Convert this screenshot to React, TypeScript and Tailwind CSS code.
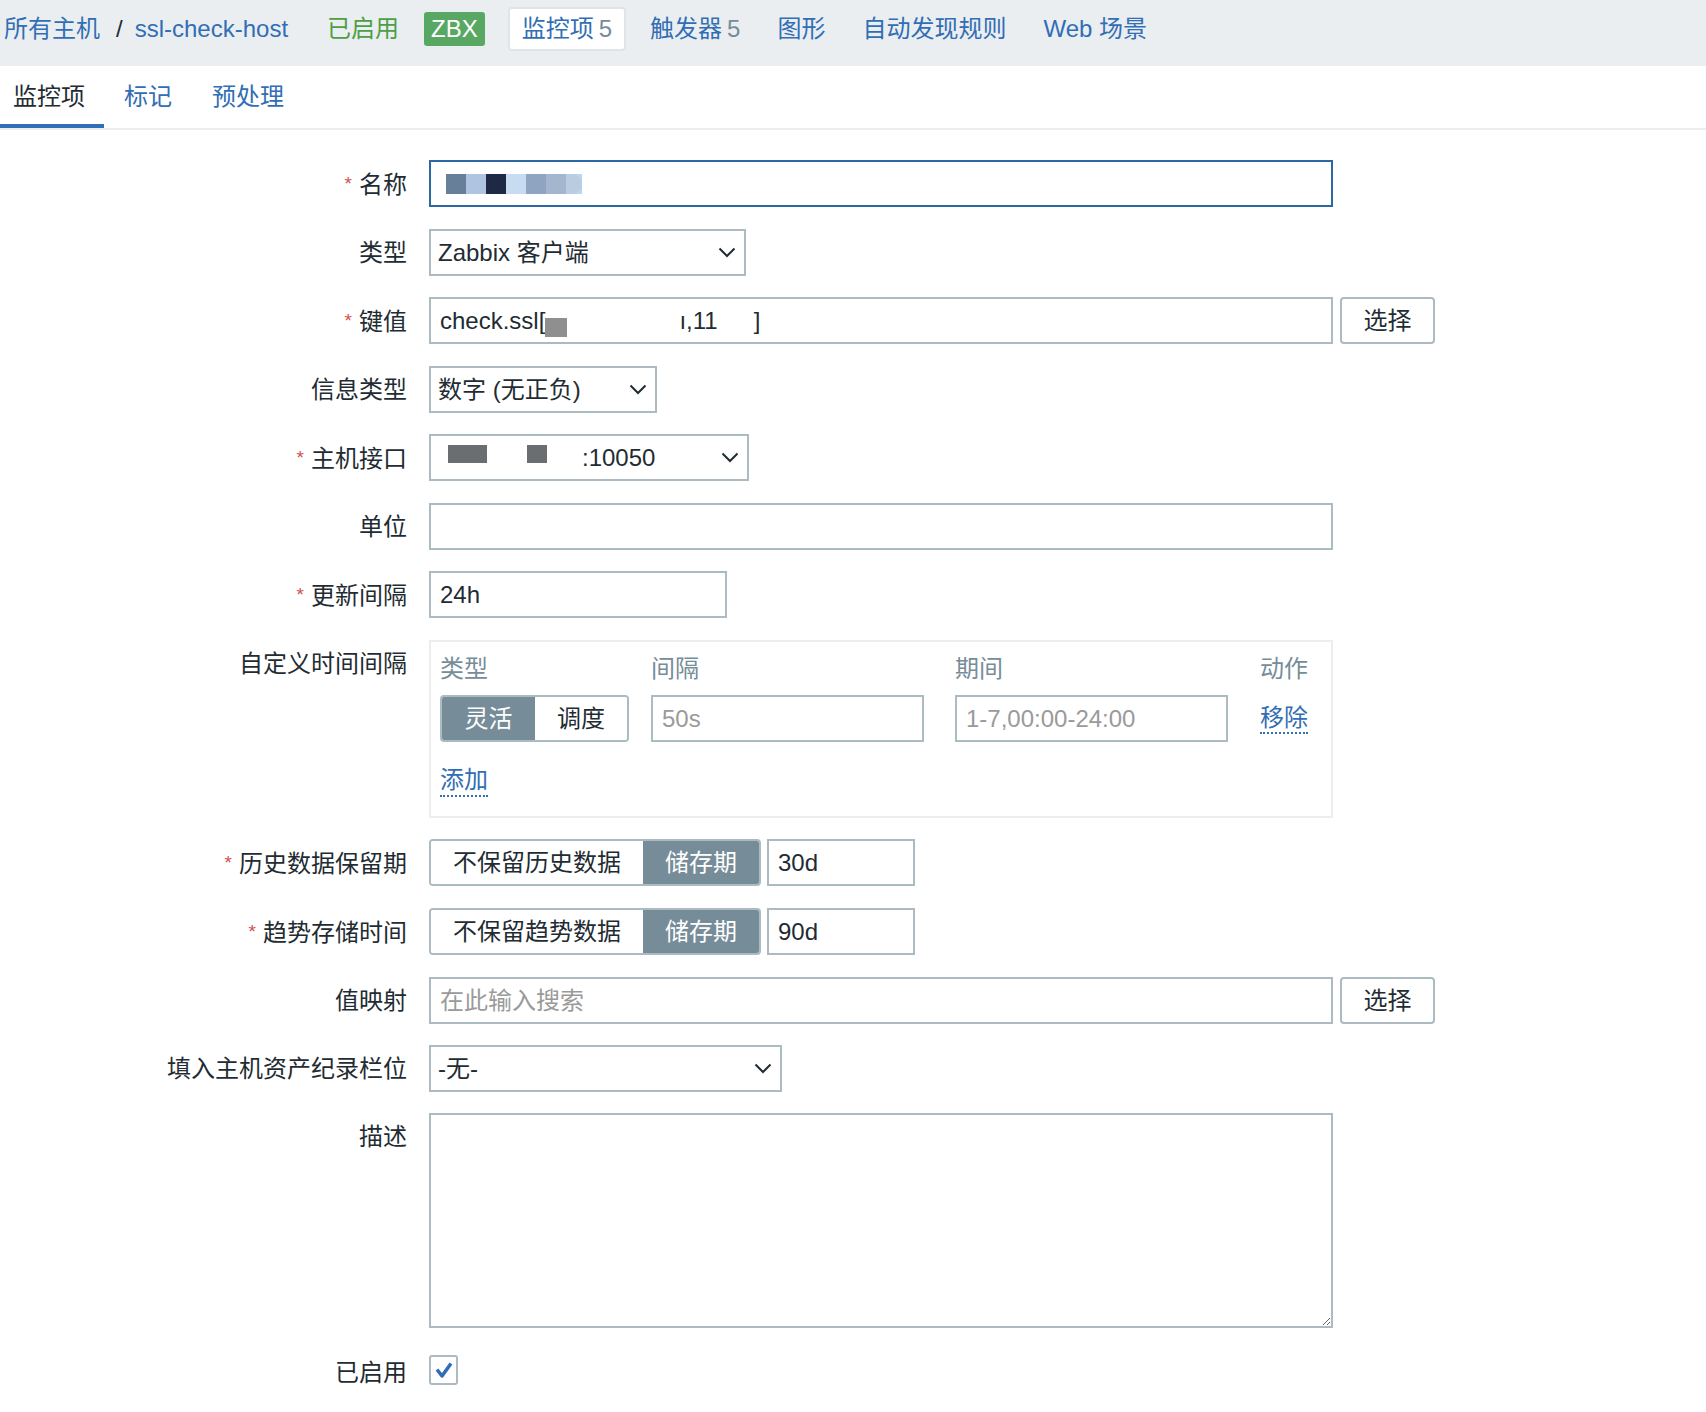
import React from 'react';

const link = 'text-[#316eb5]';

type RowProps = {
  label: string;
  required?: boolean;
  children: React.ReactNode;
};

function Row({ label, required, children }: RowProps) {
  return (
    <div className="flex">
      <div className="w-[407px] shrink-0 text-right leading-[47px] whitespace-nowrap">
        {required && <span className="mr-[7px] align-[3px] text-[19px] text-[#d64e4e]">*</span>}
        {label}
      </div>
      <div className="ml-[22px] flex items-start">{children}</div>
    </div>
  );
}

function Chevron() {
  return (
    <svg width="18" height="11" viewBox="0 0 18 11" fill="none">
      <polyline points="1.5,1.5 9,9 16.5,1.5" stroke="#1f2c33" strokeWidth="2" />
    </svg>
  );
}

function Select({ width, children }: { width: string; children: React.ReactNode }) {
  return (
    <div className={`${width} flex h-[47px] items-center justify-between border-2 border-[#acbbc2] bg-white pl-[7px] pr-[8px]`}>
      <div className="flex items-center whitespace-nowrap">{children}</div>
      <Chevron />
    </div>
  );
}

function SelectButton() {
  return (
    <div className="ml-[7px] flex h-[47px] w-[95px] items-center justify-center rounded-[4px] border-2 border-[#acbbc2] bg-white">
      选择
    </div>
  );
}

function Segmented({ left, right, leftW, rightW, active }: { left: string; right: string; leftW: string; rightW: string; active: 'left' | 'right' }) {
  return (
    <div className="flex h-[47px] w-fit overflow-hidden rounded-[4px] border-2 border-[#acbbc2]">
      <div
        className={`${leftW} flex items-center justify-center ${active === 'left' ? 'bg-[#768d99] text-white' : 'bg-white'}`}
      >
        {left}
      </div>
      <div
        className={`${rightW} flex items-center justify-center ${active === 'right' ? 'bg-[#768d99] text-white' : 'bg-white'}`}
      >
        {right}
      </div>
    </div>
  );
}

const navItems = [
  { label: '监控项', count: '5', active: true },
  { label: '触发器', count: '5' },
  { label: '图形' },
  { label: '自动发现规则' },
  { label: 'Web 场景' },
];

const nameBlocks = ['#687f99', '#aec4e0', '#1e2946', '#c7dcf0', '#8ea4c1', '#a3b6cd'];

export default function App() {
  return (
    <div className="min-h-[1412px] w-[1706px] bg-white font-['Liberation_Sans','Noto_Sans_CJK_SC',sans-serif] text-[24px] text-[#1f2c33]">
      {/* host navigation */}
      <div className="flex h-[66px] items-center bg-[#ebeef0] pb-[8px] pl-[4px] whitespace-nowrap">
        <span className={link}>所有主机</span>
        <span className="ml-[16px]">/</span>
        <span className={`ml-[12px] ${link}`}>ssl-check-host</span>
        <span className="ml-[39px] text-[#4d9f46]">已启用</span>
        <span className="ml-[25px] flex h-[34px] items-center rounded-[3px] bg-[#58a864] px-[7px] text-white">ZBX</span>
        <div className="ml-[10px] flex items-center">
          {navItems.map((item) => (
            <div
              key={item.label}
              className={`flex h-[44px] items-center ${
                item.active
                  ? 'ml-[13px] rounded-[4px] border-2 border-[#dfe4e7] bg-white px-[12px]'
                  : 'ml-[11px] px-[13px]'
              }`}
            >
              <span className={link}>{item.label}</span>
              {item.count && <span className="ml-[5px] text-[#768d99]">{item.count}</span>}
            </div>
          ))}
        </div>
      </div>

      {/* tabs */}
      <div className="flex h-[62px] pt-[4px]">
        <div className="flex items-center border-b-4 border-[#316eb5] pl-[13px] pr-[19px]">监控项</div>
        <div className={`flex items-center border-b-4 border-transparent px-[20px] ${link}`}>标记</div>
        <div className={`flex items-center border-b-4 border-transparent px-[20px] ${link}`}>预处理</div>
      </div>
      <div className="h-[2px] bg-[#ebeef0]"></div>

      {/* form */}
      <div className="flex flex-col gap-[21px] pt-[30px]">
        <Row label="名称" required>
          <div className="flex h-[47px] w-[904px] items-center border-2 border-[#2c68a3] pl-[15px]">
            <div className="flex h-[20px] bg-[#b9d6f7]">
              {nameBlocks.map((c) => (
                <div key={c} className="h-[20px] w-[20px]" style={{ backgroundColor: c }}></div>
              ))}
              <div className="h-[20px] w-[16px] rounded-r-full bg-[#b9cce0]"></div>
            </div>
          </div>
        </Row>

        <Row label="类型">
          <Select width="w-[317px]">Zabbix 客户端</Select>
        </Row>

        <Row label="键值" required>
          <div className="flex h-[47px] w-[904px] items-center border-2 border-[#acbbc2] pl-[9px] whitespace-nowrap">
            <span>check.ssl[</span>
            <span className="inline-block h-[19px] w-[22px] translate-y-[7px] bg-[#8f8f8f]"></span>
            <span className="inline-block w-[112px]"></span>
            <span>ı,11</span>
            <span className="inline-block w-[36px]"></span>
            <span>]</span>
          </div>
          <SelectButton />
        </Row>

        <Row label="信息类型">
          <Select width="w-[228px]">数字 (无正负)</Select>
        </Row>

        <Row label="主机接口" required>
          <Select width="w-[320px]">
            <span className="ml-[10px] inline-block h-[18px] w-[39px] -translate-y-[4px] bg-[#6b6e71]"></span>
            <span className="ml-[40px] inline-block h-[18px] w-[20px] -translate-y-[4px] bg-[#6b6e71]"></span>
            <span className="ml-[35px]">:10050</span>
          </Select>
        </Row>

        <Row label="单位">
          <div className="h-[47px] w-[904px] border-2 border-[#acbbc2]"></div>
        </Row>

        <Row label="更新间隔" required>
          <div className="flex h-[47px] w-[298px] items-center border-2 border-[#acbbc2] pl-[9px]">24h</div>
        </Row>

        <Row label="自定义时间间隔">
          <div className="h-[178px] w-[904px] border-2 border-[#ebeef0] pl-[9px] pt-[12px]">
            <div className="grid grid-cols-[211px_304px_305px_auto] leading-[30px] text-[#768d99]">
              <div>类型</div>
              <div>间隔</div>
              <div>期间</div>
              <div>动作</div>
            </div>
            <div className="mt-[11px] grid grid-cols-[211px_304px_305px_auto] items-center">
              <Segmented left="灵活" right="调度" leftW="w-[93px]" rightW="w-[92px]" active="left" />
              <div className="flex h-[47px] w-[273px] items-center border-2 border-[#acbbc2] pl-[9px] text-[#9a9a9a]">50s</div>
              <div className="flex h-[47px] w-[273px] items-center border-2 border-[#acbbc2] pl-[9px] text-[#9a9a9a]">1-7,00:00-24:00</div>
              <div className={`w-fit border-b-2 border-dotted border-[#316eb5] leading-[28px] ${link}`}>移除</div>
            </div>
            <div className={`mt-[23px] w-fit border-b-2 border-dotted border-[#316eb5] leading-[30px] ${link}`}>添加</div>
          </div>
        </Row>

        <Row label="历史数据保留期" required>
          <Segmented left="不保留历史数据" right="储存期" leftW="w-[212px]" rightW="w-[116px]" active="right" />
          <div className="ml-[6px] flex h-[47px] w-[148px] items-center border-2 border-[#acbbc2] pl-[9px]">30d</div>
        </Row>

        <Row label="趋势存储时间" required>
          <Segmented left="不保留趋势数据" right="储存期" leftW="w-[212px]" rightW="w-[116px]" active="right" />
          <div className="ml-[6px] flex h-[47px] w-[148px] items-center border-2 border-[#acbbc2] pl-[9px]">90d</div>
        </Row>

        <Row label="值映射">
          <div className="flex h-[47px] w-[904px] items-center border-2 border-[#acbbc2] pl-[9px] text-[#9a9a9a]">在此输入搜索</div>
          <SelectButton />
        </Row>

        <Row label="填入主机资产纪录栏位">
          <Select width="w-[353px]">-无-</Select>
        </Row>

        <Row label="描述">
          <textarea
            readOnly
            className="block h-[215px] w-[904px] resize border-2 border-[#acbbc2] outline-none"
          ></textarea>
        </Row>

        <Row label="已启用">
          <div className="flex h-[47px] items-center pb-[5px]">
            <div className="flex h-[30px] w-[29px] items-center justify-center rounded-[3px] border-2 border-[#acbbc2] bg-white">
              <svg width="20" height="18" viewBox="0 0 20 18" fill="none">
                <path d="M3 8.5 L8 15 L17 2.5" stroke="#2f6db5" strokeWidth="3.5" strokeLinejoin="round" />
              </svg>
            </div>
          </div>
        </Row>
      </div>
    </div>
  );
}
